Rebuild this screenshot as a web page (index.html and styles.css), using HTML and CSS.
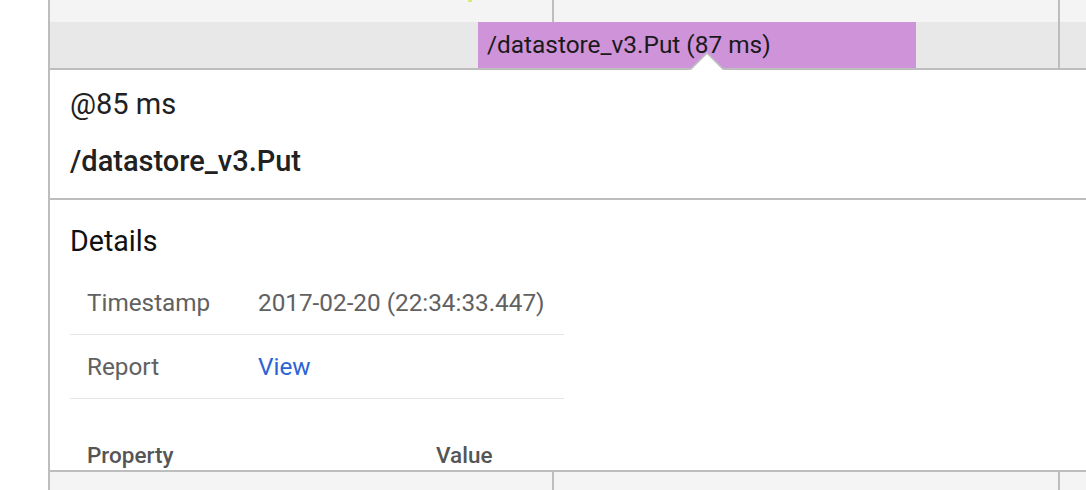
FILE: index.html
```html
<!DOCTYPE html>
<html>
<head>
<meta charset="utf-8">
<link rel="stylesheet" href="styles.css">
</head>
<body>
<div class="page">
  <div class="gutter"></div>
  <div class="main">
    <div class="row row-top">
      <div class="cell cell-a"><span class="tick" style="left: 418px;"></span></div>
      <div class="cell cell-b"></div>
      <div class="cell cell-c"></div>
    </div>
    <div class="row row-bar">
      <div class="cell cell-a"></div>
      <div class="cell cell-b"></div>
      <div class="cell cell-c"></div>
      <div class="span" style="left: 428px; width: 438px;">/datastore_v3.Put (87 ms)</div>
      <svg class="caret" style="left: 640px;" width="34" height="18" viewBox="0 0 34 18">
        <path d="M0 18 L17 1 L34 18 Z" fill="#ffffff"/>
        <path d="M0.5 17.5 L17 1 L33.5 17.5" fill="none" stroke="#bdbdbd" stroke-width="1.6"/>
      </svg>
    </div>
    <div class="panel">
      <div class="panel-head">
        <div class="at">@85 ms</div>
        <div class="name">/datastore_v3.Put</div>
      </div>
      <div class="panel-body">
        <div class="section-title">Details</div>
        <div class="details">
          <div class="drow">
            <div class="dlabel">Timestamp</div>
            <div class="dvalue">2017-02-20 (22:34:33.447)</div>
          </div>
          <div class="drow">
            <div class="dlabel">Report</div>
            <div class="dvalue"><a class="link" href="#">View</a></div>
          </div>
        </div>
        <div class="props-head">
          <div class="ph-prop">Property</div>
          <div class="ph-val">Value</div>
        </div>
      </div>
    </div>
    <div class="row row-bottom">
      <div class="cell cell-a"></div>
      <div class="cell cell-b"></div>
      <div class="cell cell-c"></div>
    </div>
  </div>
</div>
</body>
</html>
```

FILE: styles.css
```css
html, body {
  margin: 0;
  padding: 0;
  background: #ffffff;
}
body {
  font-family: Roboto, "Liberation Sans", Arial, sans-serif;
  color: #212121;
  width: 1086px;
  height: 490px;
  overflow: hidden;
}
.page {
  display: flex;
  height: 490px;
}
.gutter {
  width: 48px;
  flex: none;
  background: #ffffff;
}
.main {
  flex: 1;
  border-left: 2px solid #bdbdbd;
  display: flex;
  flex-direction: column;
  min-width: 0;
}
.row {
  display: flex;
  position: relative;
  flex: none;
}
.cell {
  height: 100%;
  box-sizing: border-box;
  position: relative;
}
.cell-a {
  width: 504px;
  border-right: 2px solid #bdbdbd;
}
.cell-b {
  width: 506px;
  border-right: 2px solid #bdbdbd;
}
.cell-c {
  flex: 1;
}
.row-top {
  height: 22px;
  background: #f4f4f4;
}
.tick {
  position: absolute;
  top: 0;
  width: 4px;
  height: 2px;
  background: #dce775;
}
.row-bar {
  height: 46px;
  background: #e8e8e8;
  border-bottom: 2px solid #bdbdbd;
}
.span {
  position: absolute;
  top: 0;
  height: 46px;
  background: #ce93d8;
  box-sizing: border-box;
  padding-left: 9px;
  font-size: 24.4px;
  line-height: 46px;
  color: #1a1a1a;
  white-space: nowrap;
}
.caret {
  position: absolute;
  bottom: -2px;
  display: block;
}
.panel {
  height: 400px;
  overflow: hidden;
  flex: none;
  background: #ffffff;
}
.panel-head {
  padding: 17px 20px 20px;
  border-bottom: 2px solid #bdbdbd;
}
.at {
  font-size: 29px;
  line-height: 34px;
  color: #212121;
}
.name {
  margin-top: 23px;
  font-size: 29px;
  line-height: 34px;
  font-weight: 500;
  color: #212121;
}
.panel-body {
  padding: 24px 20px 0;
}
.section-title {
  font-size: 28.6px;
  line-height: 34px;
  color: #111111;
}
.details {
  width: 494px;
  margin-top: 13px;
}
.drow {
  display: flex;
  align-items: center;
  height: 63px;
  border-bottom: 1px solid #e6e6e6;
  font-size: 24.3px;
  color: #616161;
}
.dlabel {
  width: 171px;
  padding-left: 17px;
}
.dvalue {
  flex: 1;
}
.link {
  color: #2b63d4;
  text-decoration: none;
}
.props-head {
  display: flex;
  align-items: center;
  margin-top: 41px;
  height: 30px;
  font-size: 22.5px;
  font-weight: 500;
  color: #555555;
}
.ph-prop {
  width: 349px;
  padding-left: 17px;
}
.ph-val {
  flex: 1;
}
.row-bottom {
  flex: 1;
  background: #f4f4f4;
  border-top: 2px solid #bdbdbd;
}
```
